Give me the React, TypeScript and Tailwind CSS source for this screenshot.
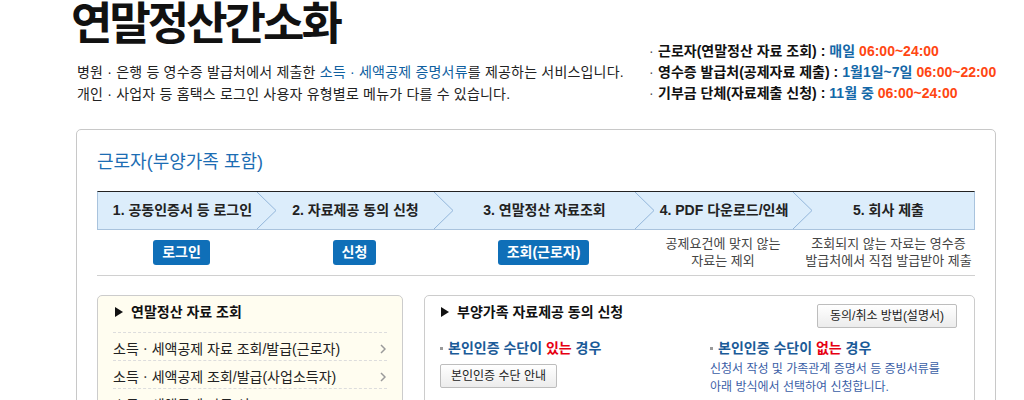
import React from "react";

type Step = {
  label: string;
  width: string;
  button?: string;
  note?: string[];
};

const steps: Step[] = [
  { label: "1. 공동인증서 등 로그인", width: "w-[169px]", button: "로그인" },
  { label: "2. 자료제공 동의 신청", width: "w-[177px]", button: "신청" },
  { label: "3. 연말정산 자료조회", width: "w-[201px]", button: "조회(근로자)" },
  { label: "4. PDF 다운로드/인쇄", width: "w-[158px]", note: ["공제요건에 맞지 않는", "자료는 제외"] },
  { label: "5. 회사 제출", width: "flex-1", note: ["조회되지 않는 자료는 영수증", "발급처에서 직접 발급받아 제출"] },
];

const schedule = [
  { who: "근로자(연말정산 자료 조회) :", when: "매일", time: "06:00~24:00" },
  { who: "영수증 발급처(공제자료 제출) :", when: "1월1일~7일", time: "06:00~22:00" },
  { who: "기부금 단체(자료제출 신청) :", when: "11월 중", time: "06:00~24:00" },
];

const lookupItems = [
  "소득ㆍ세액공제 자료 조회/발급(근로자)",
  "소득ㆍ세액공제 조회/발급(사업소득자)",
  "소득ㆍ세액공제 자료 신고",
  "소득ㆍ세액공제 자료 내려받기",
];

const Triangle = () => (
  <svg width="8" height="10" viewBox="0 0 8 10" className="shrink-0">
    <polygon points="0,0 8,5 0,10" fill="#111" />
  </svg>
);

const Arrow = () => (
  <svg width="6" height="10" viewBox="0 0 6 10" className="mr-[1px] shrink-0">
    <polyline points="1,1 5,5 1,9" fill="none" stroke="#9a9a9a" strokeWidth="1.5" />
  </svg>
);

const Bullet = () => <span className="mr-[5px] inline-block h-[3px] w-[3px] shrink-0 bg-[#9a9a9a]" />;

export default function App() {
  return (
    <div className="h-[400px] w-[1024px] overflow-hidden bg-white font-['Liberation_Sans','Noto_Sans_CJK_KR',sans-serif] text-[#222]">
      {/* header */}
      <div className="flex h-[129px]">
        <div className="w-[649px] shrink-0 pl-[77px]">
          <h1 className="ml-[-6px] pt-[2px] text-[45px] leading-[45px] font-bold tracking-[-3px] text-[#111]">
            연말정산간소화
          </h1>
          <p className="mt-[14px] text-[14px] leading-[22px] tracking-[0.2px] text-[#222]">
            병원 · 은행 등 영수증 발급처에서 제출한{" "}
            <span className="text-[#0f5f9f]">소득 · 세액공제 증명서류</span>를 제공하는 서비스입니다.
            <br />
            개인 · 사업자 등 홈택스 로그인 사용자 유형별로 메뉴가 다를 수 있습니다.
          </p>
        </div>
        <ul className="pt-[41px] text-[14px] leading-[21px] font-bold">
          {schedule.map((s) => (
            <li key={s.who} className="flex">
              <span className="w-[9px] font-normal text-[#555]">·</span>
              <span className="text-[#111]">{s.who}</span>
              <span className="ml-[4px] text-[#1468a8]">{s.when}</span>
              <span className="ml-[4px] text-[#ff4612]">{s.time}</span>
            </li>
          ))}
        </ul>
      </div>

      {/* main box */}
      <div className="ml-[76px] w-[920px] rounded-[5px] border border-[#c8c8c8] px-5 pt-5 pb-10">
        <h2 className="mb-[17px] text-[18px] leading-[24px] text-[#1c6db3]">근로자(부양가족 포함)</h2>

        <div className="flex h-[39px] border border-[#a9c3dd] border-t-[#222] bg-[#dcedfb]">
          {steps.map((step, i) => (
            <div key={step.label} className={`relative flex items-center justify-center ${step.width}`}>
              <span className="text-[14px] font-bold text-[#222]">{step.label}</span>
              {i < steps.length - 1 && (
                <svg
                  className="absolute top-0 right-[-10px] z-10 h-full w-[20px]"
                  viewBox="0 0 20 37"
                  preserveAspectRatio="none"
                >
                  <polyline points="0,0 19,18.5 0,37" fill="none" stroke="#93b6da" strokeWidth="1" />
                </svg>
              )}
            </div>
          ))}
        </div>

        <div className="flex h-[46px] border-b border-[#d0d0d0]">
          {steps.map((step) => (
            <div key={step.label} className={`flex flex-col items-center ${step.width}`}>
              {step.button && (
                <button className="mt-[10px] h-[25px] rounded-[3px] bg-[#0f6fb8] px-[9px] text-[14px] font-bold text-white">
                  {step.button}
                </button>
              )}
              {step.note && (
                <p className="mt-[5px] text-center text-[13px] leading-[17px] text-[#444]">
                  {step.note[0]}
                  <br />
                  {step.note[1]}
                </p>
              )}
            </div>
          ))}
        </div>

        <div className="mt-[19px] flex items-start gap-[21px]">
          {/* left panel */}
          <div className="h-[150px] w-[306px] shrink-0 rounded-[5px] border border-[#cccccc] bg-[#fffdf0] px-[15px]">
            <div className="flex h-[37px] items-center gap-[8px] border-b border-dashed border-[#dddddd] pb-[4px] pl-[2px]">
              <Triangle />
              <span className="text-[14px] font-bold text-[#111]">연말정산 자료 조회</span>
            </div>
            {lookupItems.map((item) => (
              <div
                key={item}
                className="flex h-[28px] items-center justify-between border-b border-dashed border-[#dddddd] pt-[5px]"
              >
                <span className="text-[14px] text-[#222]">{item}</span>
                <Arrow />
              </div>
            ))}
          </div>

          {/* right panel */}
          <div className="h-[150px] flex-1 rounded-[5px] border border-[#cccccc] bg-white px-[15px] pt-[7px]">
            <div className="flex items-start justify-between">
              <div className="flex items-center gap-[8px] pl-[1px] text-[14px] leading-[18px] font-bold text-[#111]">
                <Triangle />
                부양가족 자료제공 동의 신청
              </div>
              <button className="mt-[1px] mr-[2px] h-[24px] rounded-[2px] border border-[#bdbdbd] bg-gradient-to-b from-white to-[#ececec] px-[12px] text-[12px] text-[#222]">
                동의/취소 방법(설명서)
              </button>
            </div>

            <div className="mt-[11px] flex">
              <div className="w-[270px] shrink-0">
                <div className="flex items-center text-[14px] leading-[18px] font-bold text-[#1b5b98]">
                  <Bullet />
                  본인인증 수단이&nbsp;<span className="text-[#e60012]">있는</span>&nbsp;경우
                </div>
                <button className="mt-[7px] h-[24px] rounded-[2px] border border-[#bdbdbd] bg-gradient-to-b from-white to-[#ececec] px-[10px] text-[12px] text-[#222]">
                  본인인증 수단 안내
                </button>
              </div>
              <div>
                <div className="flex items-center text-[14px] leading-[18px] font-bold text-[#1b5b98]">
                  <Bullet />
                  본인인증 수단이&nbsp;<span className="text-[#e60012]">없는</span>&nbsp;경우
                </div>
                <p className="mt-[3px] text-[12px] leading-[18px] text-[#3a5ea6]">
                  신청서 작성 및 가족관계 증명서 등 증빙서류를
                  <br />
                  아래 방식에서 선택하여 신청합니다.
                </p>
              </div>
            </div>
          </div>
        </div>
      </div>
    </div>
  );
}
